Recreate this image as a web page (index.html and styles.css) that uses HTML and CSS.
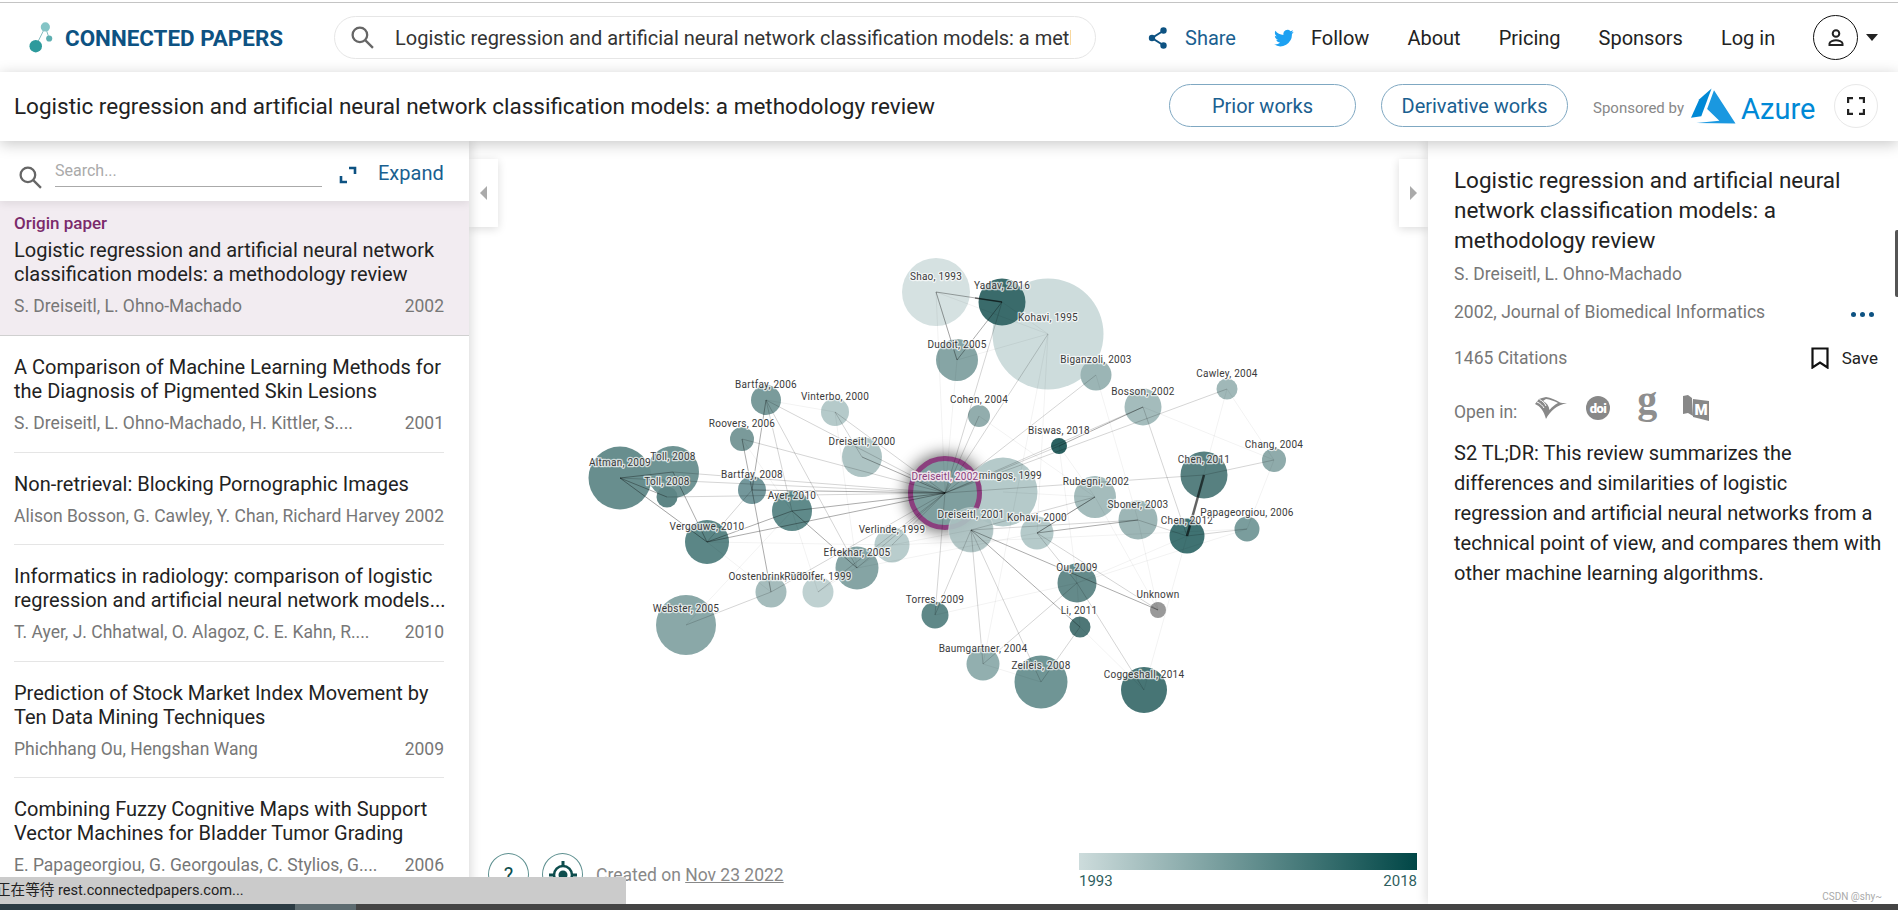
FILE: index.html
```html
<!DOCTYPE html>
<html lang="en">
<head>
<meta charset="utf-8">
<title>Connected Papers</title>
<link rel="stylesheet" href="styles.css">
</head>
<body>
<div class="topline"></div>
<header class="header">
  <div class="brand">
    <svg class="logo" viewBox="0 0 26 32"><path class="logo-link" d="M7 25 17 5M17 5 21 17"/><circle class="logo-a" cx="7" cy="25" r="6.5"/><circle class="logo-b" cx="17" cy="5" r="4.8"/><circle class="logo-c" cx="21" cy="17" r="3.2"/></svg>
    <span class="brand-name">CONNECTED PAPERS</span>
  </div>
  <div class="searchbox">
    <svg class="icon-search" viewBox="0 0 24 24"><circle cx="9.5" cy="9.5" r="7"/><path d="M14.8 14.8 22 22"/></svg>
    <span class="searchbox-text">Logistic regression and artificial neural network classification models: a methodology review</span>
  </div>
  <nav class="nav">
    <a class="nav-item nav-blue"><svg class="icon-share" viewBox="0 0 20 22"><path d="M15 4 4 11l11 7" fill="none" stroke="#0d5282" stroke-width="2"/><circle cx="15.5" cy="3.5" r="3.2"/><circle cx="4" cy="11" r="3.2"/><circle cx="15.5" cy="18.5" r="3.2"/></svg>Share</a>
    <a class="nav-item"><svg class="icon-twitter" viewBox="0 0 24 24"><path d="M23.6 4.6c-.9.4-1.8.7-2.8.8 1-.6 1.8-1.6 2.1-2.7-.9.6-2 1-3.1 1.2a4.9 4.9 0 0 0-8.4 4.5C7.4 8.2 3.8 6.2 1.7 3.3c-1.3 2.2-.6 5.1 1.5 6.5-.8 0-1.5-.2-2.2-.6 0 2.3 1.6 4.4 3.9 4.9-.7.2-1.5.2-2.2.1.6 2 2.4 3.4 4.6 3.400A9.9 9.9 0 0 1 0 19.600a13.900 13.900 0 0 0 21.500-12.400c1-.7 1.500-1.500 2.100-2.600z"/></svg>Follow</a>
    <a class="nav-item">About</a>
    <a class="nav-item">Pricing</a>
    <a class="nav-item">Sponsors</a>
    <a class="nav-item">Log in</a>
    <a class="avatar-wrap">
      <span class="avatar"><svg class="icon-user" viewBox="0 0 20 20"><circle cx="10" cy="5.5" r="3.3"/><path d="M3.5 17v-1.5c0-2 4-3.2 6.5-3.2s6.500 1.200 6.500 3.200V17z"/></svg></span>
      <span class="caret"></span>
    </a>
  </nav>
</header>
<section class="subheader">
  <h1 class="subheader-title">Logistic regression and artificial neural network classification models: a methodology review</h1>
  <a class="pill">Prior works</a>
  <a class="pill pill-second">Derivative works</a>
  <span class="sponsor">Sponsored by</span>
  <svg class="azure-mark" viewBox="0 0 46 36"><path class="azure-dark" d="M21 0 8.5 11 0 30l10.5-1.500z"/><path class="azure-light" d="M23.5 2 16.5 21 29 33 5.5 35.500 45.500 36z"/></svg>
  <span class="azure-word">Azure</span>
  <span class="fs-btn"><svg class="icon-fs" viewBox="0 0 18 18"><path d="M1 6V1h5M12 1h5v5M17 12v5h-5M6 17H1v-5"/></svg></span>
</section>
<main class="main">
  <aside class="left">
    <div class="left-head">
      <svg class="icon-search icon-search-left" viewBox="0 0 24 24"><circle cx="9.5" cy="9.5" r="7"/><path d="M14.8 14.8 22 22"/></svg>
      <span class="left-input">Search...</span>
      <svg class="icon-expand" viewBox="0 0 18 18"><path d="M10 2h6v6M8 16H2v-6"/></svg>
      <span class="expand-text">Expand</span>
    </div>
    <article class="paper paper-origin">
      <div class="origin-tag">Origin paper</div>
      <div class="paper-title">Logistic regression and artificial neural network classification models: a methodology review</div>
      <div class="paper-meta"><span>S. Dreiseitl, L. Ohno-Machado</span><span>2002</span></div>
    </article>
    <article class="paper">
      <div class="paper-title">A Comparison of Machine Learning Methods for the Diagnosis of Pigmented Skin Lesions</div>
      <div class="paper-meta"><span>S. Dreiseitl, L. Ohno-Machado, H. Kittler, S....</span><span>2001</span></div>
    </article>
    <article class="paper">
      <div class="paper-title">Non-retrieval: Blocking Pornographic Images</div>
      <div class="paper-meta"><span>Alison Bosson, G. Cawley, Y. Chan, Richard Harvey</span><span>2002</span></div>
    </article>
    <article class="paper">
      <div class="paper-title">Informatics in radiology: comparison of logistic regression and artificial neural network models...</div>
      <div class="paper-meta"><span>T. Ayer, J. Chhatwal, O. Alagoz, C. E. Kahn, R....</span><span>2010</span></div>
    </article>
    <article class="paper">
      <div class="paper-title">Prediction of Stock Market Index Movement by Ten Data Mining Techniques</div>
      <div class="paper-meta"><span>Phichhang Ou, Hengshan Wang</span><span>2009</span></div>
    </article>
    <article class="paper">
      <div class="paper-title">Combining Fuzzy Cognitive Maps with Support Vector Machines for Bladder Tumor Grading</div>
      <div class="paper-meta"><span>E. Papageorgiou, G. Georgoulas, C. Stylios, G....</span><span>2006</span></div>
    </article>
  </aside>
  <section class="graph">
    <svg class="graph-svg" viewBox="469 141 959 763">
      <defs><filter id="glow" x="-50%" y="-50%" width="200%" height="200%"><feGaussianBlur stdDeviation="8"/></filter></defs>
      <circle class="glow" cx="945" cy="493" r="39" filter="url(#glow)"/>
      <g class="nodes">
        <circle cx="936" cy="292" r="34" fill="#d5e1e1"/>
        <circle cx="1048" cy="334" r="55.5" fill="#cddcdc"/>
        <circle cx="1002" cy="302" r="23.5" fill="#3a6b6b"/>
        <circle cx="957" cy="360" r="21" fill="#86a5a5"/>
        <circle cx="979" cy="416" r="11" fill="#92adad"/>
        <circle cx="1096" cy="375" r="15.5" fill="#9bb5b5"/>
        <circle cx="1227" cy="389" r="10.5" fill="#a0b8b8"/>
        <circle cx="1143" cy="407" r="18.5" fill="#a4bcbc"/>
        <circle cx="1059" cy="446" r="8" fill="#2a6060"/>
        <circle cx="1274" cy="460" r="12" fill="#8fabab"/>
        <circle cx="1204" cy="475" r="23.5" fill="#578080"/>
        <circle cx="1003" cy="492" r="34.5" fill="#b5caca"/>
        <circle cx="1095" cy="497" r="21" fill="#a4bcbc"/>
        <circle cx="1138" cy="520" r="19.5" fill="#9db6b6"/>
        <circle cx="1187" cy="536" r="17.5" fill="#3f7272"/>
        <circle cx="1247" cy="529" r="12.5" fill="#7a9d9d"/>
        <circle cx="1037" cy="533" r="16.5" fill="#b5caca"/>
        <circle cx="1077" cy="583" r="19.5" fill="#648a8a"/>
        <circle cx="1158" cy="610" r="8" fill="#999999"/>
        <circle cx="1080" cy="627" r="10.5" fill="#4e7777"/>
        <circle cx="935" cy="615" r="13.5" fill="#5f8888"/>
        <circle cx="983" cy="664" r="16.5" fill="#92afaf"/>
        <circle cx="1041" cy="682" r="26.5" fill="#6f9595"/>
        <circle cx="1144" cy="690" r="23" fill="#477575"/>
        <circle cx="892" cy="545" r="17.5" fill="#b9cdcd"/>
        <circle cx="857" cy="568" r="21.5" fill="#85a4a4"/>
        <circle cx="818" cy="592" r="15.5" fill="#bfd1d1"/>
        <circle cx="771" cy="592" r="15.5" fill="#a5bcbc"/>
        <circle cx="686" cy="625" r="30" fill="#8aa8a8"/>
        <circle cx="707" cy="542" r="22" fill="#5b8686"/>
        <circle cx="792" cy="511" r="20" fill="#5f8a8a"/>
        <circle cx="752" cy="490" r="14" fill="#73979b"/>
        <circle cx="673" cy="472" r="26" fill="#6f9494"/>
        <circle cx="620" cy="478" r="31.5" fill="#688e8e"/>
        <circle cx="667" cy="497" r="10.5" fill="#5d8585"/>
        <circle cx="742" cy="439" r="12" fill="#7a9a9a"/>
        <circle cx="766" cy="400" r="15" fill="#7a9b9b"/>
        <circle cx="835" cy="412" r="14" fill="#b5caca"/>
        <circle cx="862" cy="457" r="20" fill="#aec4c4"/>
      </g>
      <circle class="origin-node" cx="945" cy="493" r="34.5"/>
      <circle class="d01-node" cx="971" cy="530" r="22.5"/>
      <path class="edge e1" d="M892 545 971 530M892 545 707 542M771 592 707 542M686 625 792 511M1077 583 1187 536M1077 583 1247 529M935 615 1077 583M1080 627 1144 690M1080 627 1077 583M1048 334 957 360M1048 334 936 292M1048 334 1037 533M1048 334 983 664M983 664 1041 682M1138 520 1158 610M1095 497 1158 610M1187 536 1144 690M1227 389 1274 460M1143 407 1274 460M1096 375 1138 520M979 416 1095 497M742 439 792 511M835 412 857 568M857 568 1037 533M818 592 892 545M892 545 1247 529M936 292 957 360M957 360 945 493M1059 446 1095 497M1059 446 1077 583M1227 389 1187 536M1274 460 1247 529M1048 334 1002 302M766 400 835 412M707 542 620 478M818 592 792 511M1003 492 1095 497M936 292 945 493"/>
      <path class="edge e2" d="M1048 334 945 493M1096 375 945 493M1227 389 945 493M1143 407 945 493M1059 446 945 493M1204 475 945 493M1143 407 1187 536M1204 475 1274 460M1187 536 1138 520M1187 536 1247 529M1138 520 971 530M1095 497 1037 533M1095 497 971 530M1037 533 1158 610M1037 533 1077 583M771 592 945 493M686 625 771 592M818 592 945 493M857 568 945 493M1080 627 1041 682M1077 583 983 664M971 530 1041 682M971 530 983 664M971 530 935 615M945 493 935 615M1077 583 1144 690M892 545 945 493M707 542 752 490M667 497 945 493M673 472 945 493M620 478 945 493M742 439 945 493M766 400 945 493M835 412 945 493M835 412 862 457M766 400 857 568M766 400 792 511M1002 302 945 493M979 416 945 493"/>
      <path class="edge e3" d="M862 457 945 493M752 490 945 493M792 511 945 493M707 542 945 493M707 542 792 511M971 530 1158 610M971 530 1080 627M957 360 1002 302M936 292 957 360M742 439 752 490M766 400 752 490M752 490 771 592M792 511 857 568M620 478 667 497M620 478 707 542M673 472 707 542M620 478 673 472M1143 407 1059 446M1138 520 1037 533M1095 497 1037 533M936 292 1002 302"/>
      <path class="edge e5" d="M975 298 1002 302"/>
      <path class="edge e4" d="M1204 475 1187 536"/>
      <g class="labels">
        <text x="936" y="280">Shao, 1993</text>
        <text x="1002" y="289">Yadav, 2016</text>
        <text x="1048" y="321">Kohavi, 1995</text>
        <text x="957" y="348">Dudoit, 2005</text>
        <text x="979" y="403">Cohen, 2004</text>
        <text x="1096" y="363">Biganzoli, 2003</text>
        <text x="1227" y="377">Cawley, 2004</text>
        <text x="1143" y="395">Bosson, 2002</text>
        <text x="1059" y="434">Biswas, 2018</text>
        <text x="1274" y="448">Chang, 2004</text>
        <text x="1204" y="463">Chen, 2011</text>
        <text x="1004" y="479">Domingos, 1999</text>
        <text x="1096" y="485">Rubegni, 2002</text>
        <text x="1138" y="508">Sboner, 2003</text>
        <text x="1187" y="524">Chen, 2012</text>
        <text x="1247" y="516">Papageorgiou, 2006</text>
        <text x="971" y="518">Dreiseitl, 2001</text>
        <text x="1037" y="521">Kohavi, 2000</text>
        <text x="1077" y="571">Ou, 2009</text>
        <text x="1158" y="598">Unknown</text>
        <text x="1079" y="614">Li, 2011</text>
        <text x="935" y="603">Torres, 2009</text>
        <text x="983" y="652">Baumgartner, 2004</text>
        <text x="1041" y="669">Zeileis, 2008</text>
        <text x="1144" y="678">Coggeshall, 2014</text>
        <text x="892" y="533">Verlinde, 1999</text>
        <text x="857" y="556">Eftekhar, 2005</text>
        <text x="771" y="580">Oostenbrink, 2007</text>
        <text x="818" y="580">Rudolfer, 1999</text>
        <text x="686" y="612">Webster, 2005</text>
        <text x="707" y="530">Vergouwe, 2010</text>
        <text x="792" y="499">Ayer, 2010</text>
        <text x="752" y="478">Bartfay, 2008</text>
        <text x="667" y="485">Toll, 2008</text>
        <text x="673" y="460">Toll, 2008</text>
        <text x="620" y="466">Altman, 2009</text>
        <text x="742" y="427">Roovers, 2006</text>
        <text x="766" y="388">Bartfay, 2006</text>
        <text x="835" y="400">Vinterbo, 2000</text>
        <text x="862" y="445">Dreiseitl, 2000</text>
        <text class="label-origin" x="945" y="480">Dreiseitl, 2002</text>
      </g>
    </svg>
    <button class="tab tab-left"><span class="tab-caret-left"></span></button>
    <button class="tab tab-right"><span class="tab-caret-right"></span></button>
    <div class="graph-foot">
      <span class="round-btn">?</span>
      <span class="round-btn"><svg class="icon-target" viewBox="0 0 30 30"><circle cx="15" cy="15" r="9" fill="none" stroke="#0d4d4d" stroke-width="2.5"/><circle cx="15" cy="15" r="4.5" fill="#0d4d4d"/><path d="M15 1v6M15 23v6M1 15h6M23 15h6" stroke="#0d4d4d" stroke-width="3"/></svg></span>
      <span class="created">Created on <u>Nov 23 2022</u></span>
      <div class="legend">
        <div class="legend-bar"></div>
        <div class="legend-years"><span>1993</span><span>2018</span></div>
      </div>
    </div>
  </section>
  <aside class="right">
    <h2 class="right-title">Logistic regression and artificial neural network classification models: a methodology review</h2>
    <div class="right-authors">S. Dreiseitl, L. Ohno-Machado</div>
    <div class="right-row right-row-journal"><span>2002, Journal of Biomedical Informatics</span><span class="dots"><i></i><i></i><i></i></span></div>
    <div class="right-row right-row-cite"><span>1465 Citations</span><span class="save"><svg class="icon-save" viewBox="0 0 18 22"><path d="M1.5 1.5h15v19L9 15.5l-7.5 5z"/></svg>Save</span></div>
    <div class="open-in">
      <span>Open in:</span>
      <svg class="oi oi-s2" viewBox="0 0 33 24"><path d="M1 8c5 2 9 7 11 15 4-8 11-14 21-16-4 0-6 0-7-.5C21 3.500 17 2 12 1L8 2 5 3 3 5.500z"/><path class="oi-cut" d="M9 5c4 2 6 5 6.500 9 2.500-3 5.500-5.500 8.500-7-4-2-8-3.500-12-4z"/><path class="oi-slit" d="M3 6c3 1 6 4 7 6M5.500 3.500c2.500 1 5.500 3.500 6.500 6.500"/></svg>
      <svg class="oi oi-doi" viewBox="0 0 24 24"><circle cx="12" cy="12" r="12"/><text x="12" y="16.5" class="oi-doi-text">doi</text></svg>
      <span class="oi-g">g</span>
      <svg class="oi oi-m" viewBox="0 0 26 26"><path d="M0 1l5-1 4 3 1 18-5-3-5 1z"/><path d="M10 4l16 2v20l-16-4z"/><text x="18" y="20" class="oi-m-text">M</text></svg>
    </div>
    <p class="tldr">S2 TL;DR: This review summarizes the differences and similarities of logistic regression and artificial neural networks from a technical point of view, and compares them with other machine learning algorithms.</p>
    <span class="csdn">CSDN @shy~</span>
  </aside>
</main>
<div class="taskbar"><span class="tb-a"></span><span class="tb-b"></span><span class="tb-c"></span></div>
<div class="status">正在等待 rest.connectedpapers.com...</div>
<div class="edge-scroll"></div>
</body>
</html>
```
FILE: styles.css
```css
* { box-sizing: border-box; }
html, body { margin: 0; height: 100%; }
body {
  width: 1898px; height: 910px; overflow: hidden; display: flex; flex-direction: column;
  font-family: Roboto, "Noto Sans CJK SC", sans-serif; background: #fff; color: #222; position: relative;
}
.topline { height: 3px; flex: none; border-bottom: 1px solid #c4c4c4; }
.header { height: 69px; flex: none; display: flex; align-items: center; padding-left: 29px; background: #fff; position: relative; z-index: 3; }
.brand { display: flex; align-items: center; gap: 11px; width: 305px; flex: none; }
.logo { width: 25px; height: 31px; }
.logo-link { stroke: #7fb8bb; stroke-width: 1; fill: none; }
.logo-a { fill: #2d9a9c; } .logo-b { fill: #84c4c6; } .logo-c { fill: #5eafb1; }
.brand-name { font-size: 22.4px; font-weight: 700; color: #0d5282; white-space: nowrap; }
.searchbox { width: 762px; height: 43px; flex: none; border: 1px solid #e6e6e6; border-radius: 22px; display: flex; align-items: center; padding: 0 24px 0 15px; margin-right: 52px; overflow: hidden; }
.icon-search { width: 25px; height: 25px; flex: none; fill: none; stroke: #666; stroke-width: 2.2; }
.searchbox-text { margin-left: 20px; font-size: 20px; color: #333; white-space: nowrap; overflow: hidden; }
.nav { display: flex; align-items: center; gap: 38px; font-size: 20px; color: #222; }
.nav-item { display: flex; align-items: center; gap: 17px; white-space: nowrap; }
.nav-blue { color: #1a6090; }
.icon-share { width: 20px; height: 22px; fill: #0d5282; }
.icon-twitter { width: 20px; height: 20px; fill: #1da1f2; }
.avatar-wrap { display: flex; align-items: center; gap: 8px; }
.avatar { width: 45px; height: 45px; border: 1px solid #111; border-radius: 50%; display: flex; align-items: center; justify-content: center; }
.icon-user { width: 20px; height: 20px; fill: #fff; stroke: #222; stroke-width: 2; }
.caret { width: 0; height: 0; border-left: 6px solid transparent; border-right: 6px solid transparent; border-top: 7px solid #222; }
.subheader { height: 69px; flex: none; display: flex; align-items: center; padding: 0 0 2px 14px; background: #fff; position: relative; z-index: 3; box-shadow: 0 3px 14px rgba(0,0,0,.22); }
.subheader-title { margin: 0; width: 1155px; flex: none; font-size: 22.5px; font-weight: 400; color: #222; white-space: nowrap; }
.pill { height: 43px; width: 187px; flex: none; border: 1px solid #7fa8c2; border-radius: 22px; display: flex; align-items: center; justify-content: center; font-size: 20px; color: #1a6090; }
.pill-second { margin-left: 25px; }
.sponsor { margin-left: 25px; width: 98px; margin-top: 4px; flex: none; font-size: 15px; color: #888; white-space: nowrap; }
.azure-mark { width: 45px; height: 36px; flex: none; margin-top: 1px; }
.azure-dark { fill: #0089d6; } .azure-light { fill: #1a98e0; }
.azure-word { margin: 6px 0 0 5px; width: 93px; flex: none; font-size: 29px; color: #0089d6; }
.fs-btn { width: 44px; height: 44px; flex: none; border: 1px solid #e8e8e8; border-radius: 50%; display: flex; align-items: center; justify-content: center; }
.icon-fs { width: 18px; height: 18px; fill: none; stroke: #222; stroke-width: 2.4; }
.main { flex: 1; min-height: 0; display: grid; grid-template-columns: 469px 959px 470px; }
.left { background: #fff; overflow: hidden; position: relative; z-index: 2; box-shadow: 2px 0 10px rgba(0,0,0,.15); }
.left-head { height: 60px; display: flex; align-items: flex-start; padding: 22px 26px 0 18px; box-shadow: 0 3px 8px rgba(0,0,0,.08); position: relative; }
.icon-search-left { margin-top: 2px; }
.left-input { margin-left: 12px; width: 267px; height: 24px; margin-top: 0; border-bottom: 1px solid #aaa; font-size: 16px; color: #aaa; flex: none; line-height: 15px; }
.icon-expand { width: 18px; height: 18px; margin: 3px 0 0 17px; fill: none; stroke: #0d5282; stroke-width: 2.6; flex: none; }
.expand-text { margin-left: 21px; font-size: 20px; color: #1a6090; line-height: 20px; }
.paper { margin: 0 25px 0 14px; padding: 19px 0 16.5px; border-bottom: 1px solid #e5e5e5; }
.paper-origin { margin: 0; padding: 10px 25px 17px 14px; background: #f2ecf1; border-bottom: 1px solid #d0d0d0; }
.origin-tag { height: 27px; line-height: 24px; font-size: 17px; font-weight: 500; color: #7b2a6b; }
.paper-title { font-size: 20px; line-height: 24px; color: #222; margin-right: -8px; }
.paper-meta { margin-top: 8px; display: flex; justify-content: space-between; font-size: 17.5px; line-height: 24px; color: #777; white-space: nowrap; }
.graph { position: relative; background: #fff; min-width: 0; display: flex; flex-direction: column; }
.graph-svg { position: absolute; left: 0; top: 0; width: 959px; height: 763px; }
.glow { fill: #000; opacity: .6; }
.origin-node { fill: #7f9f9f; stroke: #8b3f7e; stroke-width: 5; }
.d01-node { fill: #aac0c0; fill-opacity: .92; stroke: #fff; stroke-opacity: .3; }
.edge { fill: none; stroke: #000; stroke-width: 1; }
.e1 { stroke-opacity: .05; }
.e2 { stroke-opacity: .17; }
.e3 { stroke-opacity: .33; }
.e4 { stroke-opacity: .6; stroke-width: 2.5; }
.e5 { stroke-opacity: .5; stroke-width: 1.5; }
.labels text { font-size: 10px; letter-spacing: .25px; text-anchor: middle; fill: #3a3a3a; stroke: rgba(255,255,255,.7); stroke-width: 2.5px; paint-order: stroke; stroke-linejoin: round; }
.labels .label-origin { fill: #8b3f7e; stroke: #eee4ec; stroke-width: 3px; }
.tab { position: absolute; top: 18px; width: 29px; height: 68px; border: 0; padding: 0; background: #fff; box-shadow: 0 2px 10px rgba(0,0,0,.14); display: flex; align-items: center; justify-content: center; }
.tab-left { left: 0; } .tab-right { right: 0; }
.tab-caret-left { border-top: 7px solid transparent; border-bottom: 7px solid transparent; border-right: 7px solid #aaa; }
.tab-caret-right { border-top: 7px solid transparent; border-bottom: 7px solid transparent; border-left: 7px solid #aaa; }
.graph-foot { margin-top: auto; position: relative; display: flex; align-items: flex-start; gap: 13px; padding: 0 11px 0 19px; height: 51px; }
.round-btn { width: 41px; height: 43px; flex: none; border: 1px solid #5e9090; border-radius: 50%; display: flex; align-items: center; justify-content: center; font-size: 20px; color: #0d4d4d; background: #fff; }
.icon-target { width: 30px; height: 30px; }
.created { font-size: 17.5px; color: #888; margin-top: 12px; white-space: nowrap; }
.legend { margin-left: auto; width: 338px; }
.legend-bar { height: 17px; background: linear-gradient(90deg, #cddcdc, #004646); }
.legend-years { display: flex; justify-content: space-between; font-size: 15px; line-height: 20px; color: #2f5f5f; margin-top: 1px; }
.right { background: #fff; padding: 24px 20px 0 26px; position: relative; z-index: 2; box-shadow: -2px 0 10px rgba(0,0,0,.13); }
.right-title { margin: 0; font-size: 22.5px; font-weight: 400; line-height: 30px; color: #222; width: 410px; }
.right-authors { margin-top: 7px; font-size: 17.5px; line-height: 24px; color: #777; }
.right-row { display: flex; justify-content: space-between; align-items: center; font-size: 17.5px; line-height: 24px; color: #777; }
.right-row-journal { margin-top: 14px; }
.right-row-cite { margin-top: 22px; }
.dots { display: flex; gap: 4px; margin: 5px 4px 0 0; }
.dots i { width: 5px; height: 5px; border-radius: 50%; background: #0d5282; }
.save { display: flex; align-items: center; gap: 13px; color: #222; font-size: 17px; }
.icon-save { width: 18px; height: 22px; fill: none; stroke: #111; stroke-width: 2.2; margin-left: -3px; }
.open-in { margin-top: 26px; display: flex; align-items: center; font-size: 17.5px; color: #777; height: 32px; }
.oi { fill: #888; flex: none; margin-top: -8px; }
.oi-s2 { width: 33px; height: 24px; margin-left: 17px; }
.oi-cut { fill: #fff; }
.oi-slit { fill: none; stroke: #fff; stroke-width: 1; }
.oi-doi { width: 24px; height: 24px; margin-left: 19px; }
.oi-doi-text { font-size: 13px; font-weight: 900; fill: #fff; text-anchor: middle; letter-spacing: -.5px; }
.oi-g { margin: 0 0 24px 27px; width: 20px; font-family: "Liberation Serif", serif; font-weight: 700; font-size: 40px; line-height: 26px; color: #8e8e8e; flex: none; }
.oi-m { width: 26px; height: 26px; margin-left: 26px; }
.oi-m-text { font-size: 15px; font-weight: 900; fill: #fff; text-anchor: middle; }
.tldr { margin: 10px 0 0; font-size: 20px; line-height: 30px; color: #222; width: 430px; }
.csdn { position: absolute; right: 16px; bottom: 2px; font-size: 10px; color: #aaa; }
.taskbar { height: 6px; flex: none; display: flex; background: #444; position: relative; z-index: 4; }
.tb-a { width: 295px; background: #2b3b43; } .tb-b { width: 61px; background: #5d6b70; } .tb-c { flex: 1; }
.status { position: absolute; left: -4px; bottom: 6px; width: 630px; height: 27px; background: #cbcbcb; font-size: 14.6px; line-height: 27px; color: #222; white-space: nowrap; z-index: 5; }
.edge-scroll { position: absolute; right: 0; top: 230px; width: 3px; height: 67px; background: #555; z-index: 5; border-radius: 2px 0 0 2px; }
```
